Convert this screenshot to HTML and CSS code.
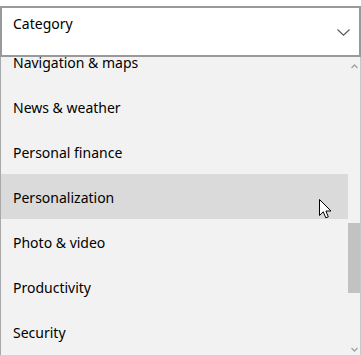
FILE: index.html
```html
<!DOCTYPE html>
<html>
<head>
<meta charset="utf-8">
<link rel="stylesheet" href="styles.css">
</head>
<body>
<div class="combo">
  <span class="combo-label">Category</span>
  <svg class="chev" width="13" height="7" viewBox="0 0 13 7"><path d="M0.5 0.5 L6.5 6.2 L12.5 0.5" fill="none" stroke="#555" stroke-width="1.1"/></svg>
</div>
<div class="list">
  <div class="items">
    <div class="item first">Navigation &amp; maps</div>
    <div class="item">News &amp; weather</div>
    <div class="item">Personal finance</div>
    <div class="item hover">Personalization</div>
    <div class="item">Photo &amp; video</div>
    <div class="item">Productivity</div>
    <div class="item">Security</div>
  </div>
  <div class="scrollbar">
    <svg class="arrow up" width="7" height="5" viewBox="0 0 7 5"><path d="M0.5 4 L3.5 1 L6.5 4" fill="none" stroke="#a0a0a0" stroke-width="1.3"/></svg>
    <div class="track-space"></div>
    <div class="thumb"></div>
    <div class="track-rest"></div>
    <svg class="arrow down" width="7" height="5" viewBox="0 0 7 5"><path d="M0.5 1 L3.5 4 L6.5 1" fill="none" stroke="#a0a0a0" stroke-width="1.3"/></svg>
  </div>
</div>
<svg class="cursor" width="14" height="21" viewBox="0 0 14 21"><path d="M0.5 0.5 L0.5 16.5 L4.3 12.8 L6.8 18.8 L9.3 17.8 L6.9 12 L12 12 Z" fill="#fff" stroke="#000" stroke-width="1"/></svg>
</body>
</html>
```
FILE: styles.css
```css
html, body {
  margin: 0;
  padding: 0;
  background: #fff;
  width: 361px;
  height: 355px;
  overflow: hidden;
  font-family: "Noto Sans", "Open Sans", sans-serif;
  color: #000;
}
body {
  padding-top: 6px;
  position: relative;
  box-sizing: border-box;
}
.combo {
  box-sizing: border-box;
  height: 51px;
  width: 361px;
  border: 2px solid #999;
  display: flex;
  justify-content: space-between;
  align-items: flex-start;
  padding: 5px 9px 0 11px;
  background: #fff;
}
.combo-label {
  font-size: 14px;
  line-height: 22px;
}
.chev {
  margin-top: 16px;
}
.list {
  display: flex;
  height: 298px;
  box-sizing: border-box;
  border-left: 1px solid #a8a8a8;
  border-right: 1px solid #c8c8c8;
  background: #f2f2f2;
  overflow: hidden;
}
.items {
  flex: 1;
  display: flex;
  flex-direction: column;
}
.item {
  flex: 0 0 45px;
  height: 45px;
  display: flex;
  align-items: center;
  padding: 1px 0 0 12px;
  box-sizing: border-box;
  font-size: 14px;
}
.item.first {
  margin-top: -18px;
}
.item.hover {
  background: #dadada;
}
.scrollbar {
  width: 12px;
  display: flex;
  flex-direction: column;
  align-items: center;
  position: relative;
}
.arrow {
  position: absolute;
  left: 3px;
}
.arrow.up { top: 7px; }
.arrow.down { top: 290px; }
.track-space { height: 166px; }
.thumb {
  width: 12px;
  height: 70px;
  background: #c2c2c2;
}
.cursor {
  position: absolute;
  left: 319px;
  top: 199px;
}
```
